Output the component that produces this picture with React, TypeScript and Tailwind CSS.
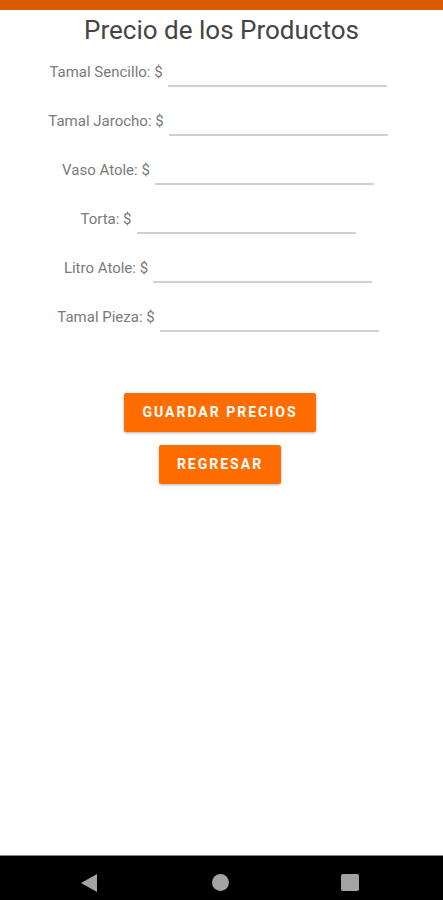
import React from "react";

const rows = [
  "Tamal Sencillo: $",
  "Tamal Jarocho: $",
  "Vaso Atole: $",
  "Torta: $",
  "Litro Atole: $",
  "Tamal Pieza: $",
];

export default function App() {
  return (
    <div
      className="w-[443px] h-[900px] flex flex-col bg-white overflow-hidden"
      style={{ fontFamily: "Roboto, 'Liberation Sans', sans-serif" }}
    >
      <div className="h-[10px] bg-[#db5b00] shrink-0" />
      <div className="flex-1 flex flex-col items-center">
        <h1 className="mt-[6px] h-[28px] leading-[28px] text-[26px] font-normal text-[#444444] text-center">
          Precio de los Productos
        </h1>
        <div className="mt-[4px] flex flex-col items-center w-full pr-[7px]">
          {rows.map((r) => (
            <div key={r} className="flex items-start h-[49px] gap-[5px]">
              <span className="mt-[14px] leading-[20px] text-[15px] text-[#7a7a7a] whitespace-nowrap">
                {r}
              </span>
              <div className="w-[219px] h-[39px] border-b-2 border-[#d0d0d0]" />
            </div>
          ))}
        </div>
        <div className="flex flex-col items-center pr-[3px]">
          <button className="mt-[51px] w-[192px] h-[39px] bg-[#ff6d00] text-white text-[14px] font-bold tracking-[2px] rounded-[2px] shadow-[0_1px_3px_rgba(0,0,0,0.3)]">
            GUARDAR PRECIOS
          </button>
          <button className="mt-[13px] w-[122px] h-[39px] bg-[#ff6d00] text-white text-[14px] font-bold tracking-[2px] rounded-[2px] shadow-[0_1px_3px_rgba(0,0,0,0.3)]">
            REGRESAR
          </button>
        </div>
      </div>
      <div className="h-[45px] shrink-0 bg-black border-t border-[#8a8a8a] flex items-center relative">
        <svg className="absolute left-[81px] top-[18px]" width="17" height="18" viewBox="0 0 17 18">
          <polygon points="16,0 16,18 0,9" fill="#a3a3a3" />
        </svg>
        <div className="absolute left-[212px] top-[18px] w-[17px] h-[17px] rounded-full bg-[#a3a3a3]" />
        <div className="absolute left-[341px] top-[18px] w-[18px] h-[17px] rounded-[2px] bg-[#a3a3a3]" />
      </div>
    </div>
  );
}
